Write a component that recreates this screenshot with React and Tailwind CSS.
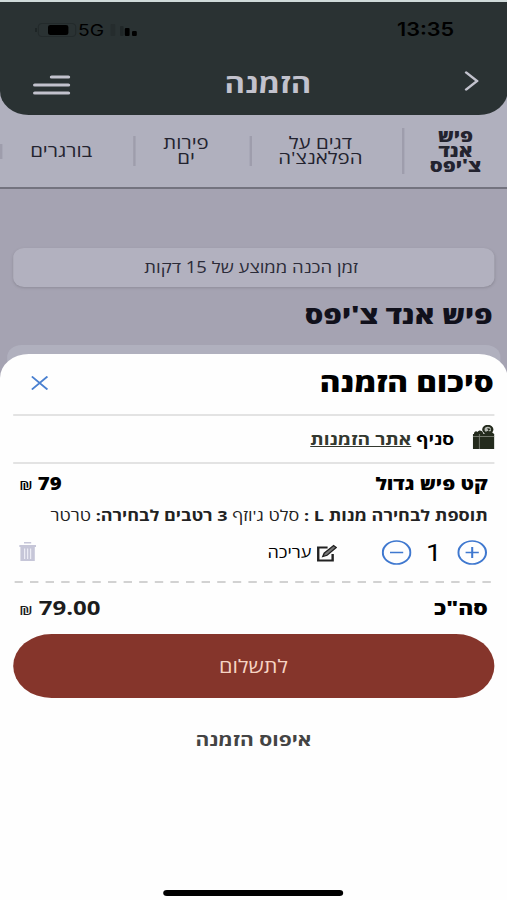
import React, { useState } from "react";

const categories = [
  { id: 1, lines: ["פיש", "אנד", "צ'יפס"], active: true, width: "w-[86px]" },
  { id: 2, lines: ["דגים על", "הפלאנצ'ה"], width: "w-[125px]" },
  { id: 3, lines: ["פירות", "ים"], width: "w-[95px]" },
  { id: 4, lines: ["בורגרים"], width: "w-[109px]", last: true },
];

const StatusBar = () => (
  <div
    dir="ltr"
    className="h-[54px] pt-[2px] pl-[29px] pr-[44px] flex items-center justify-between text-black font-[Inter,sans-serif]"
  >
    <div className="flex items-center">
      <svg width="36" height="14" viewBox="0 0 36 14">
        <rect x="3" y="0.5" width="31" height="13" rx="3" fill="none" stroke="#232a2b" />
        <path d="M1 5v4" stroke="#1d2425" strokeWidth="1.5" />
        <rect x="11" y="2" width="17" height="10" rx="2" fill="#000" />
      </svg>
      <span className="text-[16px] leading-none">5G</span>
      <svg className="ml-[5px]" width="28" height="14" viewBox="0 0 28 14">
        <rect x="0" y="1" width="4" height="12" rx="1" fill="#252c2d" />
        <rect x="8" y="3" width="3" height="10" rx="1" fill="#202728" />
        <rect x="12" y="5" width="4" height="8" rx="1" fill="#000" />
        <rect x="18" y="8" width="4" height="5" rx="1" fill="#000" />
      </svg>
    </div>
    <span className="text-[18px] leading-none font-semibold">13:35</span>
  </div>
);

const Header = () => (
  <header className="h-[115px] border-t-2 border-[#cfdada] bg-[#2a3233] rounded-b-[24px]">
    <StatusBar />
    <div className="h-[54px] pr-[24px] pl-[26px] flex items-center justify-between text-[#c2c2cd]">
      <svg className="mb-[4px]" width="12" height="20" viewBox="0 0 12 20" fill="none">
        <path d="M1.5 1.500l9 8.500-9 8.500" stroke="currentColor" strokeWidth="2.4" strokeLinecap="round" />
      </svg>
      <h1 className="text-[26px] font-bold">הזמנה</h1>
      <svg className="mt-[4px]" width="34" height="20" viewBox="0 0 34 20">
        <path
          d="M17 2h14M3 10h28M3 18h28"
          stroke="currentColor"
          strokeWidth="3"
          strokeLinecap="round"
        />
      </svg>
    </div>
  </header>
);

const CategoryTabs = () => (
  <nav className="h-[74px] flex items-center bg-[#b0b0be] border-b-2 border-[#73737f] overflow-hidden">
    {categories.map((category) => (
      <div key={category.id} className="flex items-center shrink-0">
        <div
          className={`${category.width} pb-[2px] text-center text-[17px] leading-[15px] text-[#23232f] ${
            category.active ? "font-extrabold" : "pr-[10px]"
          }`}
        >
          {category.lines.map((line) => (
            <div key={line}>{line}</div>
          ))}
        </div>
        <div
          className={`w-[2px] bg-[#9e9dac] ${
            category.active ? "h-[46px]" : category.last ? "h-[15px]" : "h-[30px]"
          }`}
        />
      </div>
    ))}
  </nav>
);

const GiftIcon = () => (
  <svg className="mb-[4px]" width="18" height="24" viewBox="0 0 18 24">
    <path d="M0 9h18v15H0z" fill="#242b1d" />
    <path d="M5.500 9v15M0 11.500h18" stroke="#7d8278" strokeWidth="0.800" />
    <path d="M1 9c0-3 2-3.500 3-2 1-2.500 4-2 5 2z" fill="#242b1d" />
    <circle cx="12.500" cy="4.500" r="3.700" fill="#b9bcb5" stroke="#242b1d" strokeWidth="2" />
    <path d="M10 8c2-3 4-2 7 0l1 2H9zM12 3l3 1-2 2z" fill="#242b1d" />
  </svg>
);

const EditIcon = () => (
  <svg width="17" height="18" viewBox="0 0 17 18" fill="none">
    <path d="M9 3.500H1.200v13h12V10" stroke="#222" strokeWidth="2" />
    <path d="M5 12.500l1.200-3.500 7.800-7.500 2.200 2-7.700 7.800z" fill="#777" stroke="#222" strokeWidth="1.200" />
  </svg>
);

const TrashIcon = () => (
  <svg width="14" height="20" viewBox="0 0 14 20">
    <path d="M4 0h6v1.500H4zM0 3h14v2H0z" fill="#c6c6d8" />
    <path d="M1 5h12v14H1z" fill="#c6c6d8" />
    <path d="M4.500 6.500v10.500M7 6.500v10.500M9.500 6.500v10.500" stroke="#ececf5" strokeWidth="1" />
  </svg>
);

const RoundButton = ({ plus, onClick }) => (
  <button onClick={onClick} className="w-[25px] h-[25px]">
    <svg width="25" height="25" viewBox="0 0 25 25" fill="none" stroke="#3f78cf" strokeWidth="1.700">
      <circle cx="12.500" cy="12.500" r="11.500" />
      <path d={plus ? "M7 12.500h11M12.500 7v11" : "M7 12.500h11"} />
    </svg>
  </button>
);

const OrderSummary = () => {
  const [amount, setAmount] = useState(1);
  const price = 79 * amount;

  return (
    <section className="absolute inset-x-0 bottom-0 h-[546px] bg-[#fefefe] rounded-t-[24px] px-[11px] flex flex-col text-black">
      <div className="h-[62px] pb-[2px] pl-[15px] flex items-center justify-between border-b-2 border-[#e3e3e3]">
        <h2 className="text-[26.2px] font-extrabold">סיכום הזמנה</h2>
        <svg width="14" height="14" viewBox="0 0 14 14" fill="none">
          <path d="M0.500 0.500l13 13M13.500 0.500l-13 13" stroke="#4a80d0" strokeWidth="1.700" />
        </svg>
      </div>

      <div className="h-[48px] pb-[1px] flex items-center gap-[15px] border-b-2 border-[#e3e3e3]">
        <GiftIcon />
        <p className="text-[16px] font-bold">
          סניף <span className="underline text-[#33382f]">אתר הזמנות</span>
        </p>
      </div>

      <div className="px-[5px]">
        <div className="h-[40px] flex items-center justify-between text-[17px] font-extrabold">
          <span>קט פיש גדול</span>
          <span>
            79 <span className="text-[13px] font-semibold">₪</span>
          </span>
        </div>
        <p className="h-[22px] flex items-center whitespace-pre text-[15px] text-[#222]">
          <b>תוספת לבחירה מנות L : </b>סלט ג'וזף <b>3 רטבים לבחירה: </b>טרטר
        </p>
        <div className="h-[55px] pb-[3px] pr-[1px] flex items-center justify-between">
          <div className="flex items-center">
            <RoundButton plus onClick={() => setAmount(amount + 1)} />
            <span className="w-[38px] pt-[2px] text-center text-[23px] leading-none font-[Roboto,sans-serif]">
              {amount}
            </span>
            <RoundButton onClick={() => setAmount(Math.max(1, amount - 1))} />
            <button className="mr-[37px] pt-[1px] flex items-center gap-[4px] text-[15px]">
              <EditIcon />
              עריכה
            </button>
          </div>
          <TrashIcon />
        </div>
      </div>

      <svg width="400" height="2" viewBox="0 0 400 2">
        <path d="M0 1h400" stroke="#d2d2d2" strokeWidth="2" strokeDasharray="7 6" />
      </svg>

      <div className="h-[51px] px-[5px] flex items-center justify-between font-extrabold">
        <span className="text-[19px]">סה"כ</span>
        <span className="pb-[2px] text-[20px] font-bold text-[#1c1c1c]">
          {price.toFixed(2)} <span className="text-[13px] font-semibold">₪</span>
        </span>
      </div>

      <button className="h-[64px] shrink-0 rounded-full bg-[#85352b] text-[#f6d3c3] text-[18px] font-medium">
        לתשלום
      </button>
      <button className="mt-[25px] h-[32px] text-[17.5px] font-bold text-[#444]">
        איפוס הזמנה
      </button>
      <div className="mt-auto mb-[4px] mx-auto w-[150px] h-[6px] rounded-full bg-black" />
    </section>
  );
};

const App = () => {
  return (
    <div className="w-[507px] h-[900px] overflow-hidden bg-[#a5a3b2]">
      <div
        dir="rtl"
        className="relative w-[422.5px] h-[900px] origin-top-left scale-x-[1.2] bg-[#a5a3b2] font-['Open_Sans',sans-serif]"
      >
        <div className="bg-[#b0b0be]">
          <Header />
          <CategoryTabs />
        </div>
        <main className="px-[11px] pt-[59px]">
          <div className="h-[39px] pr-[4px] rounded-[9px] bg-[#b2b1bf] shadow-sm flex items-center justify-center text-[15.4px] text-[#2b2b38]">
            זמן הכנה ממוצע של 15 דקות
          </div>
          <h2 className="h-[56px] pr-[1px] flex items-center text-[24.3px] font-extrabold text-[#11111c]">
            פיש אנד צ'יפס
          </h2>
          <div className="-mx-[5px] mt-[2px] h-[60px] rounded-[12px] bg-[#b0b0be]" />
        </main>
        <OrderSummary />
      </div>
    </div>
  );
};

export default App;
